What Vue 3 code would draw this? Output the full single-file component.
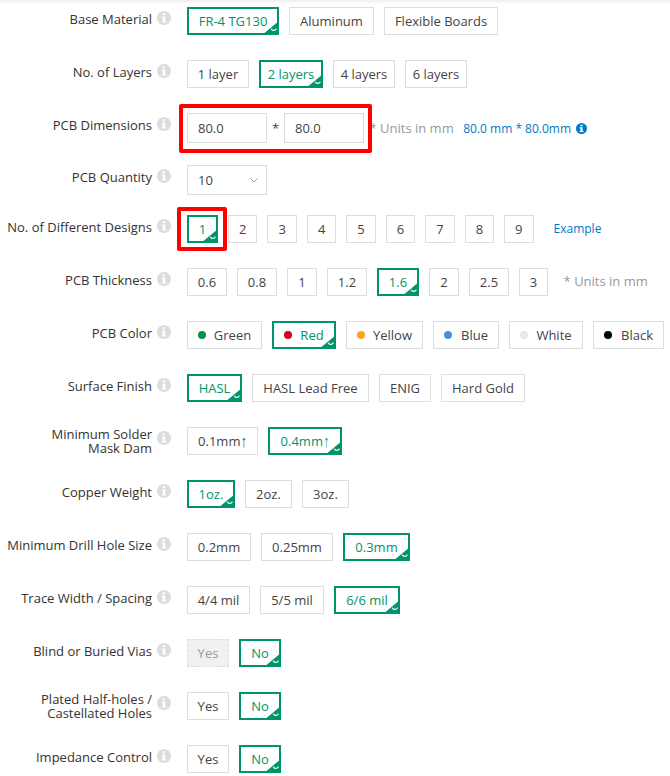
<script setup>
import { ref } from 'vue'

const rows = ref([
  { label: 'Base Material', options: ['FR-4 TG130', 'Aluminum', 'Flexible Boards'], widths: [92, 85, 114], selected: 'FR-4 TG130' },
  { label: 'No. of Layers', options: ['1 layer', '2 layers', '4 layers', '6 layers'], widths: [62, 64, 62, 62], selected: '2 layers' },
  { label: 'PCB Dimensions', kind: 'dimensions' },
  { label: 'PCB Quantity', kind: 'quantity' },
  { label: 'No. of Different Designs', options: ['1', '2', '3', '4', '5', '6', '7', '8', '9'], widths: [31.06], selected: '1', kind: 'designs' },
  { label: 'PCB Thickness', options: ['0.6', '0.8', '1', '1.2', '1.6', '2', '2.5', '3'], widths: [40, 40, 30, 40, 42, 30, 40, 29], selected: '1.6', kind: 'thickness' },
  { label: 'PCB Color', options: ['Green', 'Red', 'Yellow', 'Blue', 'White', 'Black'], widths: [75, 64, 77, 66, 74, 71], selected: 'Red', kind: 'color' },
  { label: 'Surface Finish', options: ['HASL', 'HASL Lead Free', 'ENIG', 'Hard Gold'], widths: [55, 117, 52, 84], selected: 'HASL' },
  { label: 'Minimum Solder\nMask Dam', options: ['0.1mm↑', '0.4mm↑'], widths: [71, 74], selected: '0.4mm↑' },
  { label: 'Copper Weight', options: ['1oz.', '2oz.', '3oz.'], widths: [48, 47, 47], selected: '1oz.' },
  { label: 'Minimum Drill Hole Size', options: ['0.2mm', '0.25mm', '0.3mm'], widths: [64, 72, 67], selected: '0.3mm' },
  { label: 'Trace Width / Spacing', options: ['4/4 mil', '5/5 mil', '6/6 mil'], widths: [63, 64, 66], selected: '6/6 mil' },
  { label: 'Blind or Buried Vias', options: ['Yes', 'No'], widths: [42, 42], selected: 'No', disabled: 'Yes' },
  { label: 'Plated Half-holes /\nCastellated Holes', options: ['Yes', 'No'], widths: [42, 42], selected: 'No' },
  { label: 'Impedance Control', options: ['Yes', 'No'], widths: [42, 42], selected: 'No' },
])

function choose(row, option) {
  if (row.disabled !== option) row.selected = option
}

function optionWidth(row, index) {
  return row.widths[index] ? { width: row.widths[index] + 'px' } : null
}
</script>

<template>
  <main class="form">
    <div class="shade"></div>
    <section v-for="row in rows" :key="row.label" class="row" :class="row.kind">
      <div class="label" :class="{ double: row.label.includes('\n') }">{{ row.label }}</div>
      <svg class="info" viewBox="0 0 14 14">
        <circle cx="7" cy="7" r="7" />
        <path d="M5.7 2.2h2.5v2H5.7zM4.8 5.5h3.4v4.7h1.1v1.4H4.7v-1.4h1.1V6.9h-1z" />
      </svg>

      <div v-if="row.kind === 'dimensions'" class="controls">
        <span class="field">80.0</span>
        <span class="times">*</span>
        <span class="field">80.0</span>
        <span class="units">* Units in mm</span>
        <span class="converted">80.0 mm * 80.0mm</span>
        <svg class="info-blue" viewBox="0 0 14 14">
          <circle cx="7" cy="7" r="7" />
          <path d="M5.7 2.2h2.7v2H5.7zM4.6 5.5h3.8v4.7h1.1v1.4H4.6v-1.4h1.1V6.9H4.6z" />
        </svg>
        <div class="mark mark-dimensions"></div>
      </div>

      <div v-else-if="row.kind === 'quantity'" class="controls">
        <span class="field select">
          10
          <svg class="arrow" viewBox="0 0 8 5"><path d="M.6.6 4 4 7.4.6" /></svg>
        </span>
      </div>

      <div v-else class="controls">
        <button
          v-for="(option, index) in row.options"
          :key="option"
          type="button"
          class="option"
          :class="{ active: option === row.selected, disabled: option === row.disabled }"
          :style="optionWidth(row, index)"
          @click="choose(row, option)"
        >
          <i v-if="row.kind === 'color'" class="dot" :class="option.toLowerCase()"></i>
          <span>{{ option.replace('↑', '') }}<span v-if="option.endsWith('↑')" class="up">↑</span></span>
          <svg v-if="option === row.selected" class="corner" viewBox="0 0 17 14">
            <path class="fill" d="M17 0v14H0z" />
            <path class="tick" d="M9.1 7.7 10.8 9.4H12.6L14.5 7.7" />
          </svg>
        </button>
        <a v-if="row.kind === 'designs'" class="example">Example</a>
        <span v-if="row.kind === 'thickness'" class="units">* Units in mm</span>
        <div v-if="row.kind === 'designs'" class="mark mark-design"></div>
      </div>
    </section>
  </main>
</template>

<style>
body {
  margin: 0;
  background: #fff;
  overflow: hidden;
}
</style>

<style scoped>
.form {
  width: 670px;
  height: 776px;
  overflow: hidden;
  background: #fff;
  font-family: "Open Sans", "Liberation Sans", sans-serif;
  font-size: 13px;
  color: #444;
}
.shade {
  height: 7px;
  background: linear-gradient(#eee, #fff 4px);
}
.row {
  display: flex;
  align-items: flex-start;
  height: 53px;
}
.row.dimensions { height: 52px; }
.row.quantity { height: 50px; }
.label {
  width: 152px;
  padding-top: 5px;
  line-height: 14px;
  text-align: right;
  white-space: pre;
  color: #333;
}
.label.double { padding-top: 0; }
.info {
  width: 14px;
  height: 14px;
  margin: 4px 16px 0 5px;
  flex: none;
}
.info circle { fill: #dcdcdc; }
.info path, .info-blue path { fill: #fff; }
.controls {
  position: relative;
  display: flex;
  gap: 10px;
  white-space: nowrap;
}
.option {
  position: relative;
  display: flex;
  flex: none;
  align-items: center;
  justify-content: center;
  box-sizing: border-box;
  height: 28px;
  padding: 0;
  border: 1px solid #ddd;
  background: #fff;
  font: inherit;
  line-height: 18px;
  color: #444;
}
.designs .option:not(.active) { padding: 0 10px; }
.option.active {
  border: 2px solid #00946c;
  color: #00946c;
}
.option.disabled {
  border: 1px dashed #ddd;
  background: #f1f1f1;
  color: #999;
}
.up {
  display: inline-block;
  transform: scaleY(1.3);
}
.corner {
  position: absolute;
  right: -2px;
  bottom: -2px;
  width: 17px;
  height: 14px;
}
.corner .fill { fill: #00946c; }
.corner .tick {
  fill: none;
  stroke: #dff5ed;
  stroke-width: 1.3;
}
.dot {
  box-sizing: border-box;
  width: 8px;
  height: 8px;
  margin-right: 8px;
  border-radius: 50%;
}
.green { background: #078f4d; }
.red { background: #d0021b; }
.yellow { background: #f8a31f; }
.blue { background: #4a90e2; }
.white { background: #ebebe0; border: 1px solid #e2e2da; }
.black { background: #000; }
.dot.blue, .dot.black { margin-right: 9px; }
.field {
  box-sizing: border-box;
  width: 80px;
  height: 30px;
  padding-left: 10px;
  border: 1px solid #ddd;
  line-height: 28px;
}
.dimensions .controls { gap: 0; line-height: 30px; }
.times { width: 17px; text-align: center; }
.units { color: #999; }
.dimensions .units { margin-left: 5.5px; }
.thickness .units { margin-left: 5.6px; line-height: 26px; }
.converted {
  margin-left: 9.5px;
  font-size: 12px;
  line-height: 31px;
  color: #0079c8;
}
.info-blue {
  width: 11px;
  height: 11px;
  margin: 10px 0 0 5px;
}
.info-blue circle { fill: #0079c8; }
.select {
  display: flex;
  justify-content: space-between;
  padding-right: 8px;
}
.arrow {
  width: 8px;
  height: 5px;
  margin-top: 12px;
}
.arrow path { fill: none; stroke: #999; }
.example {
  margin-left: 10px;
  font-size: 12px;
  line-height: 28px;
  color: #0079c8;
}
.mark {
  position: absolute;
  box-sizing: border-box;
  border: 4px solid #f00;
  border-radius: 2px;
}
.mark-dimensions {
  left: -8px;
  top: -9px;
  width: 193px;
  height: 49px;
}
.mark-design {
  left: -10px;
  top: -8px;
  width: 50px;
  height: 44px;
}
</style>
